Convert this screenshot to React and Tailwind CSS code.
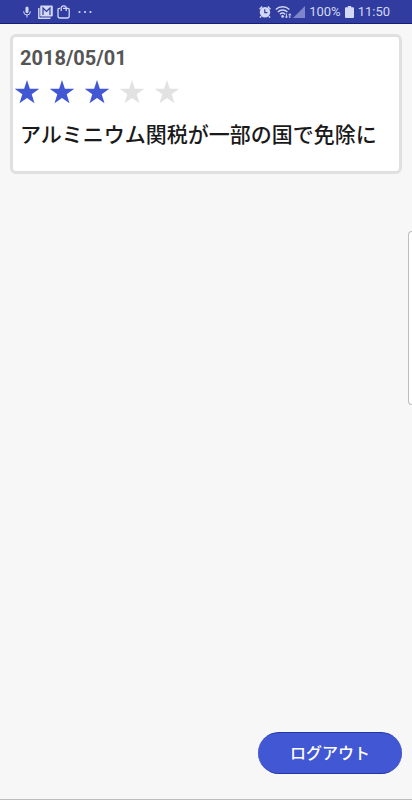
const articles = [
  { id: 1, date: "2018/05/01", rating: 3, title: "アルミニウム関税が一部の国で免除に" },
];

export default function App() {
  return (
    <div className="flex min-h-dvh flex-col border-b border-[#bdbdbd] bg-[#f7f7f7] font-['Roboto','Noto_Sans_CJK_JP',sans-serif]">
      <StatusBar />
      <main className="flex flex-1 flex-col">
        <ul className="flex flex-1 flex-col gap-2.5 p-2.5">
          {articles.map((article) => (
            <ArticleCard article={article} key={article.id} />
          ))}
        </ul>
        <div className="flex justify-end px-2.5 pb-[25px]">
          <button
            type="button"
            className="rounded-full border-y border-[#2336a8] bg-[#4257d3] px-8 pb-2 pt-2.5 text-base leading-[22px] font-medium text-white"
          >
            ログアウト
          </button>
        </div>
      </main>
      <aside className="absolute right-0 top-[231px] h-[174px] w-1 rounded-l-md border border-r-0 border-[#bdbdbd] bg-white" aria-label="Edge panel" />
    </div>
  );
}

function ArticleCard({ article }) {
  return (
    <li className="flex flex-col rounded-md border-3 border-[#e0e0e0] bg-white pb-5 pt-[7px]">
      <time className="px-[7px] text-xl leading-7 font-bold text-[#555555]">{article.date}</time>
      <Rating value={article.rating} />
      <h2 className="px-[7px] pt-[15px] text-[21px] leading-8 font-medium text-[#1a1a1a]">{article.title}</h2>
    </li>
  );
}

function Rating({ value }) {
  return (
    <div className="flex gap-[11px] px-0.5 pt-2" role="img" aria-label={`${value} / 5`}>
      {[1, 2, 3, 4, 5].map((star) => (
        <svg
          className={star <= value ? "h-6 w-6 fill-[#4257d3]" : "h-6 w-6 fill-[#e2e2e2]"}
          viewBox="0 0 24 24"
          key={star}
        >
          <path d="M12 0 14.9 8.8H24.200l-7.500 5.500 2.800 9L12 17.900l-7.500 5.400 2.800-9L-.2 8.800h9.300z" />
        </svg>
      ))}
    </div>
  );
}

function StatusBar() {
  return (
    <header className="flex h-6 items-center justify-between border-b border-[#172078] bg-[#303c9f] px-[22px] text-[#d3d8f5]">
      <div className="flex items-center">
        <MicIcon />
        <MailIcon />
        <BagIcon />
        <MoreIcon />
      </div>
      <div className="flex items-center gap-1">
        <AlarmIcon />
        <div className="flex items-center gap-px">
          <WifiIcon />
          <SignalIcon />
        </div>
        <span className="text-[13px] leading-5">100%</span>
        <BatteryIcon />
        <span className="text-[13px] leading-5">11:50</span>
      </div>
    </header>
  );
}

function MicIcon() {
  return (
    <svg className="h-3 w-2.5" viewBox="0 0 10 12" fill="none" stroke="currentColor">
      <rect x="3.5" y="0.5" width="3" height="6.5" rx="1.5" fill="currentColor" stroke="none" />
      <path d="M1.7 5.2v.5a3.300 3.300 0 0 0 6.600 0v-.5M5 9v2.500" />
    </svg>
  );
}

function MailIcon() {
  return (
    <svg className="ml-1.5 h-3.5 w-[15px]" viewBox="0 0 15 14" fill="none" stroke="currentColor">
      <path d="M.8 3v10.200H12.500" strokeWidth="1.4" />
      <path d="M3.200.5h10.600a1 1 0 0 1 1 1v9a1 1 0 0 1-1 1H3.200a1 1 0 0 1-1-1v-9a1 1 0 0 1 1-1z" fill="currentColor" stroke="none" />
      <path d="M5 10V3l3.500 3.500L12 3v7" stroke="#303c9f" strokeWidth="1.2" />
    </svg>
  );
}

function BagIcon() {
  return (
    <svg className="ml-1 h-3.5 w-3.5" viewBox="0 0 14 14" fill="none" stroke="currentColor" strokeWidth="1.3">
      <path d="M3 3.400H2.200A1.200 1.200 0 0 0 1 4.600v6.400A2 2 0 0 0 3 13h7.200a2 2 0 0 0 2-2V4.600A1.200 1.200 0 0 0 11 3.400H6" />
      <path d="M4.200 6V3a2.200 2.200 0 0 1 2.200-2.200h.6A2.200 2.200 0 0 1 9.200 3v3" />
    </svg>
  );
}

function MoreIcon() {
  return (
    <svg className="ml-1.5 h-1 w-4" viewBox="0 0 16 4" fill="currentColor">
      <circle cx="2.5" cy="2" r="1.1" />
      <circle cx="8" cy="2" r="1.1" />
      <circle cx="13.5" cy="2" r="1.1" />
    </svg>
  );
}

function AlarmIcon() {
  return (
    <svg className="h-3 w-3" viewBox="0 0 12 12">
      <circle cx="6" cy="6.2" r="5.2" fill="currentColor" />
      <path d="M.6 3.200 3.200.6M11.400 3.200 8.800.6M2.200 10.200 1 11.600M9.800 10.200l1.200 1.400" stroke="currentColor" strokeWidth="1.5" />
      <path d="M5.800 3.200v3.400h2.600" fill="none" stroke="#303c9f" strokeWidth="1.2" />
    </svg>
  );
}

function WifiIcon() {
  return (
    <svg className="h-3.5 w-[17px]" viewBox="0 0 17 14" fill="none" stroke="currentColor" strokeWidth="1.4">
      <path d="M.8 4.400a10 10 0 0 1 13.600 0M2.800 6.900a7 7 0 0 1 9.600 0M4.900 9.200a4 4 0 0 1 5.200 0" />
      <circle cx="7.6" cy="11.4" r="1.3" fill="currentColor" stroke="none" />
      <path d="M11.400 8.600v4.200M10.100 11.500l1.300 1.400 1.300-1.400M14.800 13V8.800M13.500 10.200l1.300-1.400 1.300 1.400" strokeWidth="1" />
    </svg>
  );
}

function SignalIcon() {
  return (
    <svg className="h-3 w-3" viewBox="0 0 12 12" fill="#7d86ca">
      <path d="M12 0v12H0z" />
    </svg>
  );
}

function BatteryIcon() {
  return (
    <svg className="h-3 w-[9px]" viewBox="0 0 9 12" fill="currentColor">
      <path d="M2.800 0h3.400v1.300H8a1 1 0 0 1 1 1V11a1 1 0 0 1-1 1H1a1 1 0 0 1-1-1V2.300a1 1 0 0 1 1-1h1.800z" />
    </svg>
  );
}
